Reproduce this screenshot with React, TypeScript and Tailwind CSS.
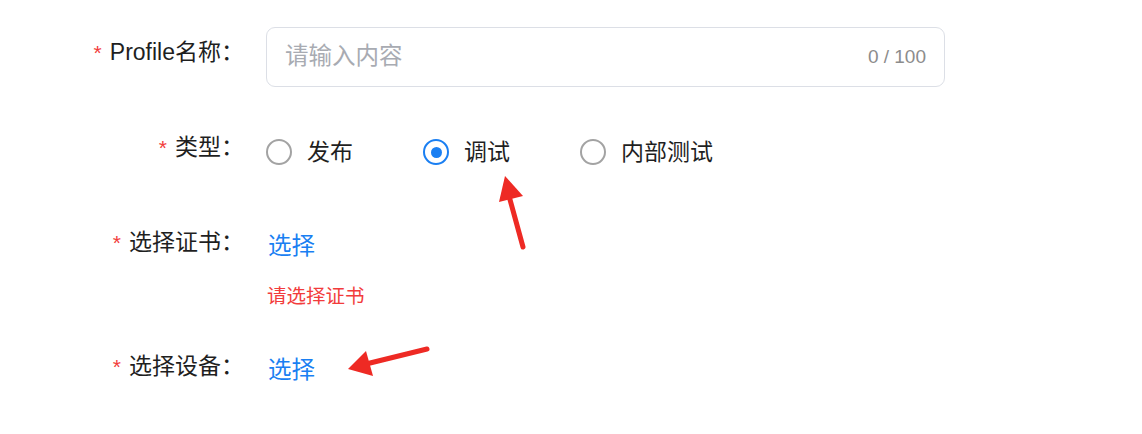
import React from "react";

const FONT = "font-['Liberation_Sans','Noto_Sans_CJK_SC',sans-serif]";

const RADIOS = [
  { label: "发布", checked: false },
  { label: "调试", checked: true },
  { label: "内部测试", checked: false },
];

function Label({ text }: { text: string }) {
  return (
    <div className="w-[244px] shrink-0 text-right text-[23px] text-[#1f1f1f] pb-[9px] mr-[22px] whitespace-nowrap">
      <span className="text-[#f23c3c] text-[21px] mr-[8px]">*</span>
      {text}
    </div>
  );
}

function Radio({ label, checked }: { label: string; checked: boolean }) {
  return (
    <label className="flex items-center mr-[70px] cursor-pointer">
      {checked ? (
        <span className="w-[26px] h-[26px] rounded-full border-2 border-[#1a7ff2] flex items-center justify-center">
          <span className="w-[11px] h-[11px] rounded-full bg-[#1a7ff2]" />
        </span>
      ) : (
        <span className="w-[26px] h-[26px] rounded-full border-2 border-[#a3a3a3]" />
      )}
      <span className="ml-[15px] text-[23px] text-[#1f1f1f]">{label}</span>
    </label>
  );
}

export default function App() {
  return (
    <div className={`relative w-[1142px] h-[434px] bg-white overflow-hidden ${FONT}`}>
      <div className="pt-[27px]">
        {/* Profile name */}
        <div className="flex items-center h-[60px]">
          <Label text="Profile名称：" />
          <div className="w-[679px] h-[60px] border border-[#dcdfe6] rounded-[9px] flex items-center justify-between pl-[18px] pr-[18px]">
            <span className="text-[23.5px] text-[#a8abb2]">请输入内容</span>
            <span className="text-[19px] text-[#8c8c8c]">0 / 100</span>
          </div>
        </div>

        {/* Type */}
        <div className="flex items-center h-[40px] mt-[45px]">
          <Label text="类型：" />
          <div className="flex items-center">
            {RADIOS.map((r) => (
              <Radio key={r.label} label={r.label} checked={r.checked} />
            ))}
          </div>
        </div>

        {/* Certificate */}
        <div className="flex items-center h-[40px] mt-[55px]">
          <Label text="选择证书：" />
          <span className="pl-[2px] text-[23.5px] text-[#1a7ff2] cursor-pointer">选择</span>
        </div>
        <div className="pl-[267px] mt-[17px] text-[19.5px] leading-[24px] text-[#f23c3c]">
          请选择证书
        </div>

        {/* Device */}
        <div className="flex items-center h-[40px] mt-[43px]">
          <Label text="选择设备：" />
          <span className="pl-[2px] text-[23.5px] text-[#1a7ff2] cursor-pointer">选择</span>
        </div>
      </div>

      {/* annotation arrows */}
      <svg className="absolute inset-0 pointer-events-none" width="1142" height="434" viewBox="0 0 1142 434">
        <line x1="523" y1="247" x2="509" y2="196" stroke="#ee2a24" strokeWidth="5" strokeLinecap="round" />
        <polygon points="505,176 499,202 523,196" fill="#ee2a24" />
        <line x1="427" y1="349" x2="366" y2="364" stroke="#ee2a24" strokeWidth="5" strokeLinecap="round" />
        <polygon points="348,369 366,351 373,376" fill="#ee2a24" />
      </svg>
    </div>
  );
}
